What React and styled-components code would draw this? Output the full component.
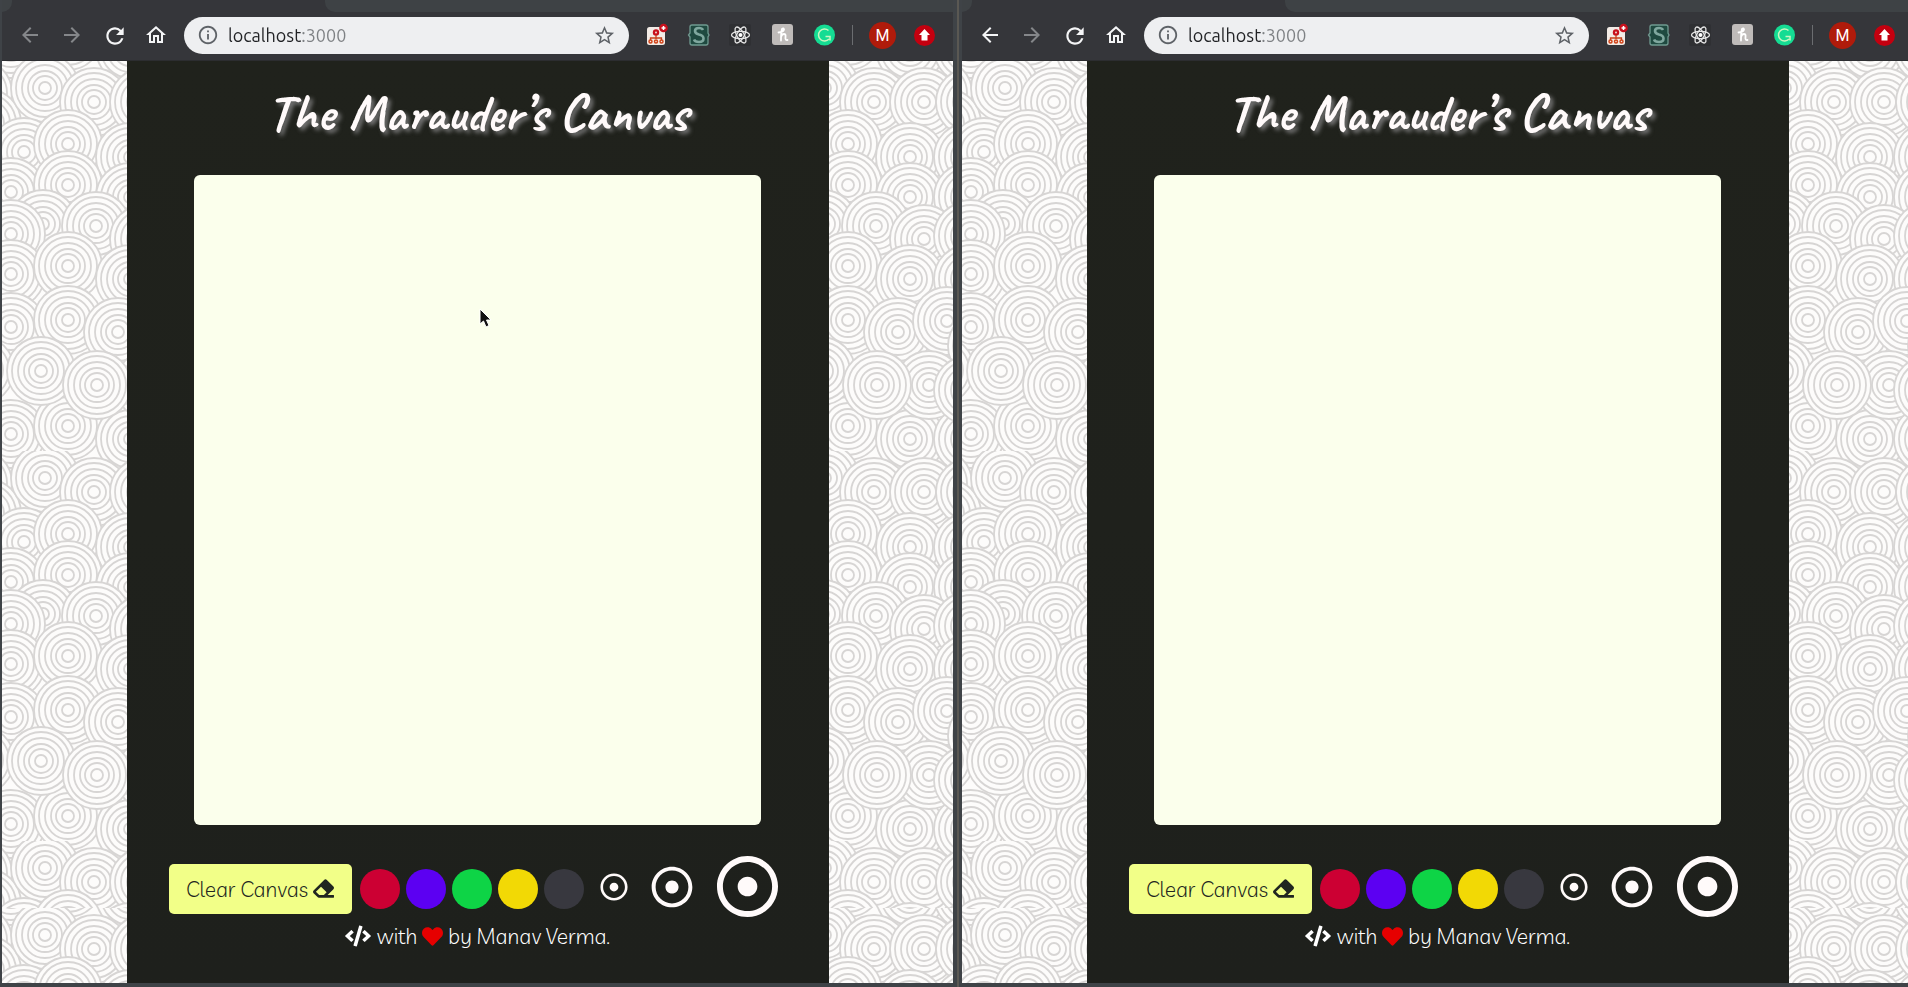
import React from "react";
import styled, { createGlobalStyle } from "styled-components";
import { FaCode, FaEraser, FaHeart, FaRegDotCircle } from "react-icons/fa";
import {
  MdArrowBack,
  MdArrowForward,
  MdRefresh,
  MdInfoOutline,
  MdStarBorder,
  MdOutlineHome,
} from "react-icons/md";

const GlobalStyle = createGlobalStyle`
  *, *::before, *::after { box-sizing: border-box; }
  body { margin: 0; background: #3f4347; overflow-x: hidden; }
  button { border: 0; margin: 0; padding: 0; background: none; cursor: pointer; }
`;

/* ---------- desktop and browser frame ---------- */

const Viewport = styled.main`
  overflow: hidden;
`;

const Desktop = styled.div`
  display: grid;
  grid-template-columns: 1fr 1fr;
  width: calc(100% + 12px);
  min-height: 100vh;
`;

const BrowserWindow = styled.section`
  position: relative;
  display: flex;
  flex-direction: column;
  padding: 0 7px 4px 2px;
  background: linear-gradient(
    to left,
    #3f4347 0 1px,
    #5a5853 1px 3px,
    #3f4347 3px
  );
`;

const TabStrip = styled.div`
  display: flex;
  gap: 313px;
  height: 12px;
  background: #35363a;
`;

const FirstTab = styled.div`
  width: 10px;
  background: #3e4245;
  border-bottom-right-radius: 10px;
`;

const OtherTabs = styled.div`
  flex: 1;
  background: #3e4245;
  border-bottom-left-radius: 10px;
`;

const Toolbar = styled.nav`
  display: flex;
  align-items: center;
  height: 49px;
  padding: 0 18px 2px 16px;
  background: #35363a;
  border-bottom: 1px solid #2c2d30;
`;

const NavButtons = styled.div`
  display: flex;
  gap: 18px;
`;

const NavButton = styled.button`
  display: grid;
  place-items: center;
  width: 24px;
  height: 24px;
  color: ${(p) => (p.disabled ? "#85878a" : "#f4f5f6")};
`;

const AddressBar = styled.label`
  flex: 1;
  display: flex;
  align-items: center;
  gap: 9px;
  height: 37px;
  margin: 0 15px 0 16px;
  padding: 0 13px;
  border-radius: 19px;
  background: #eeeff1;
  color: #5f6368;
`;

const AddressInput = styled.input`
  flex: 1;
  min-width: 0;
  height: 28px;
  padding: 0;
  border: 0;
  outline: 0;
  font: 18px/28px Ubuntu, "Open Sans", "Noto Sans", sans-serif;
  background: linear-gradient(to right, #202124 0 73px, #7d8083 73px);
  background-clip: text;
  -webkit-text-fill-color: transparent;
`;

const Extensions = styled.div`
  display: flex;
  gap: 18px;
`;

const Divider = styled.span`
  width: 1px;
  height: 20px;
  margin: 0 16px;
  background: #6b6d70;
`;

const Avatar = styled.button`
  width: 27px;
  height: 27px;
  margin-right: 18px;
  border-radius: 50%;
  background: #b01b0b;
  color: #ffffff;
  font: 16px/27px Roboto, sans-serif;
`;

const UpdateButton = styled.button`
  display: grid;
  place-items: center;
  width: 21px;
  height: 21px;
  border-radius: 50%;
  background: #c4000f;
`;

/* ---------- the drawing page ---------- */

const Page = styled.div`
  position: relative;
  flex: 1;
  display: flex;
  justify-content: center;
  background: #fdfcfb;
`;

const WallpaperArt = styled.svg`
  position: absolute;
  inset: 0;
  width: 100%;
  height: 100%;
`;

const Column = styled.article`
  position: relative;
  display: flex;
  flex-direction: column;
  align-items: center;
  width: 74%;
  min-width: 640px;
  max-width: 702px;
  background: linear-gradient(#20221c, #1e201c);
  color: #ffffff;
`;

const Title = styled.h1`
  margin: 0;
  font: 700 52px/104px Caveat, "Caveat Brush", Lato, cursive;
  height: 114px;
  color: #fffafa;
  text-shadow: 3px 3px 4px #777777;
`;

const DrawingCanvas = styled.canvas`
  display: block;
  width: 567px;
  height: 650px;
  border-radius: 6px;
  background: #fbffec;
`;

const Controls = styled.div`
  display: flex;
  align-items: center;
  margin-top: 30px;
  padding-right: 8px;
`;

const ClearButton = styled.button`
  display: flex;
  align-items: center;
  justify-content: center;
  gap: 5px;
  width: 183px;
  height: 50px;
  border-radius: 5px;
  background: #f2ff88;
  color: #212520;
  font: 300 21px/24px Livvic, Lato, sans-serif;
`;

const Swatches = styled.div`
  display: flex;
  gap: 6px;
  margin: 0 16px 0 8px;
`;

const Swatch = styled.button`
  width: 40px;
  height: 40px;
  border-radius: 50%;
  background: ${(p) => p.$ink};
`;

const BrushSizes = styled.div`
  display: flex;
  align-items: center;
  gap: 23px;
  padding-bottom: 4px;
`;

const BrushButton = styled.button`
  display: flex;
  color: #fffafa;
`;

const Credit = styled.p`
  display: flex;
  align-items: center;
  gap: 5px;
  margin: 0;
  font: 300 21px/28px Livvic, Lato, sans-serif;
`;

const Pointer = styled.svg`
  position: absolute;
  left: 479px;
  top: 308px;
  width: 14px;
  height: 20px;
`;

/* ---------- wallpaper: a 390px tile of overlapping ringed discs ---------- */

const DISCS = [
  [-24, -30], [9, -17], [66, -25], [128, -12], [186, -12],
  [-24, 32], [-15, 62], [43, 27], [92, 41], [142, 41], [188, 41],
  [22, 91], [66, 83], [128, 96], [186, 96],
  [9, 131], [66, 124], [128, 136], [186, 136],
  [41, 163], [94, 165], [9, 173], [142, 178], [186, 175],
  [9, 213], [66, 205], [128, 218], [186, 218],
  [9, 266], [66, 259], [116, 271], [165, 260], [200, 285],
  [9, 373], [66, 365], [128, 378], [186, 378],
  [147, 324], [-22, 309], [39, 310], [95, 324], [186, 329],
];
const RINGS = [29, 23, 17, 12, 6];

function Wallpaper({ id }) {
  return (
    <WallpaperArt aria-hidden="true">
      <defs>
        <g id={`${id}-disc`} fill="#fdfcfb" stroke="#d7d5d4" strokeWidth="1.8">
          <circle r="34" />
          {RINGS.map((r) => (
            <circle key={r} r={r} />
          ))}
        </g>
        <pattern id={id} width="390" height="390" patternUnits="userSpaceOnUse">
          {DISCS.map(([x, y]) => (
            <use key={`${x},${y}`} href={`#${id}-disc`} x={x} y={y} />
          ))}
        </pattern>
      </defs>
      <rect width="100%" height="847" fill={`url(#${id})`} />
      <svg y="847" width="100%" height="100%">
        <rect width="100%" height="100%" fill={`url(#${id})`} />
      </svg>
    </WallpaperArt>
  );
}

/* ---------- extension icons ---------- */

const SitemapIcon = () => (
  <svg width="24" height="24" viewBox="0 0 24 24">
    <rect x="3" y="4" width="18" height="18" rx="2.5" fill="#f3ece6" />
    <circle cx="12" cy="9.500" r="3.200" fill="#c8101c" />
    <circle cx="12" cy="9.500" r="0.900" fill="#f3ece6" />
    <path d="M12 12v4M6.500 17v-2h11v2" stroke="#c8401c" strokeWidth="1.300" fill="none" />
    <g fill="#f3ece6" stroke="#d2451a" strokeWidth="1.500">
      <circle cx="6.500" cy="18.500" r="1.500" />
      <circle cx="12" cy="18.500" r="1.500" />
      <circle cx="17.500" cy="18.500" r="1.500" />
    </g>
    <circle cx="19.500" cy="5" r="4.300" fill="#c8101c" />
    <path d="M19.500 3v4M17.500 5h4" stroke="#fff" strokeWidth="1.500" />
  </svg>
);

const BracesIcon = () => (
  <svg width="24" height="24" viewBox="0 0 24 24">
    <rect x="4" y="2" width="18" height="20" rx="3" fill="#1f4a40" />
    <path d="M7 2H6Q4 2 4 4v6l-1.500 2L4 14v6q0 2 2 2h14q2 0 2-2v-6l1-2-1-2V4q0-2-2-2z" fill="none" stroke="#6f9a90" strokeWidth="1.300" />
    <path d="M17 7Q16 5 13 5 9 5 9 8q0 2.500 4 3.500 4.500 1 4.500 4Q17.500 19 13 19q-4 0-5-2.500" fill="none" stroke="#7fa79e" strokeWidth="2.600" />
  </svg>
);

const AtomIcon = () => (
  <svg width="24" height="24" viewBox="0 0 24 24">
    <rect x="1" y="1" width="22" height="22" rx="2" fill="#2f3033" />
    <g fill="none" stroke="#e8e8e8" strokeWidth="1.300">
      <ellipse cx="12.500" cy="12" rx="9" ry="3.600" />
      <ellipse cx="12.500" cy="12" rx="9" ry="3.600" transform="rotate(60 12.500 12)" />
      <ellipse cx="12.500" cy="12" rx="9" ry="3.600" transform="rotate(120 12.500 12)" />
    </g>
    <circle cx="12.500" cy="12" r="2" fill="#fff" />
  </svg>
);

const HoneyIcon = () => (
  <svg width="24" height="24" viewBox="0 0 24 24">
    <rect x="2" y="1" width="21" height="21" rx="3" fill="#bfbbb9" />
    <path d="M8.500 9.500Q13.500 9 14 6.500 13.500 4.500 12 6 11 9 11 17.500M11 14q1-3 3-3 2 0 1.500 3-.500 3.500 2 3" fill="none" stroke="#fff" strokeWidth="1.800" strokeLinecap="round" />
  </svg>
);

const GrammarIcon = () => (
  <svg width="24" height="24" viewBox="0 0 24 24">
    <circle cx="12.500" cy="12" r="10.500" fill="#15dc93" />
    <path d="M16.500 7.500A6 6 0 1 0 17 16M13.500 13.500H18v4" fill="none" stroke="#c9f5c0" strokeWidth="1.500" />
  </svg>
);

const EXTENSIONS = [
  ["Site map", SitemapIcon],
  ["Snippets", BracesIcon],
  ["React tools", AtomIcon],
  ["Coupons", HoneyIcon],
  ["Grammar check", GrammarIcon],
];

const INKS = [
  ["Red", "#cc0033"],
  ["Purple", "#5c00f2"],
  ["Green", "#0ed446"],
  ["Yellow", "#f2d905"],
  ["Charcoal", "#38383f"],
];

const BRUSHES = [
  ["Small brush", 28],
  ["Medium brush", 42],
  ["Large brush", 63],
];

function Browser({ id, canGoBack, children }) {
  return (
    <BrowserWindow>
      <TabStrip>
        <FirstTab />
        <OtherTabs />
      </TabStrip>
      <Toolbar>
        <NavButtons>
          <NavButton aria-label="Back" disabled={!canGoBack}>
            <MdArrowBack size={24} />
          </NavButton>
          <NavButton aria-label="Forward" disabled>
            <MdArrowForward size={24} />
          </NavButton>
          <NavButton aria-label="Reload">
            <MdRefresh size={26} />
          </NavButton>
          <NavButton aria-label="Home">
            <MdOutlineHome size={24} />
          </NavButton>
        </NavButtons>
        <AddressBar>
          <MdInfoOutline size={22} />
          <AddressInput aria-label="Address" defaultValue="localhost:3000" />
          <MdStarBorder size={23} />
        </AddressBar>
        <Extensions>
          {EXTENSIONS.map(([name, Icon]) => (
            <NavButton key={name} aria-label={name}>
              <Icon />
            </NavButton>
          ))}
        </Extensions>
        <Divider />
        <Avatar>M</Avatar>
        <UpdateButton aria-label="Update">
          <svg width="11" height="12" viewBox="0 0 11 12">
            <path d="M5.500 0 11 6H8.500v5.500h-6V6H0z" fill="#fff" />
          </svg>
        </UpdateButton>
      </Toolbar>
      <Page>
        <Wallpaper id={id} />
        <Column>
          <Title>The Marauder’s Canvas</Title>
          <DrawingCanvas />
          <Controls>
            <ClearButton>
              Clear Canvas <FaEraser size={21} />
            </ClearButton>
            <Swatches>
              {INKS.map(([name, ink]) => (
                <Swatch key={name} aria-label={name} $ink={ink} />
              ))}
            </Swatches>
            <BrushSizes>
              {BRUSHES.map(([name, size]) => (
                <BrushButton key={name} aria-label={name}>
                  <FaRegDotCircle size={size} />
                </BrushButton>
              ))}
            </BrushSizes>
          </Controls>
          <Credit>
            <FaCode size={26} />
            <span>with</span>
            <FaHeart size={21} color="#e60000" />
            <span>by Manav Verma.</span>
          </Credit>
        </Column>
      </Page>
      {children}
    </BrowserWindow>
  );
}

export default function App() {
  return (
    <>
      <GlobalStyle />
      <Viewport>
        <Desktop>
          <Browser id="wallpaper-left">
            <Pointer viewBox="0 0 14 20" aria-hidden="true">
              <path d="M1 1v15l3.500-3 2.500 6 3-1.500L7.500 12H12z" fill="#111" stroke="#fff" strokeWidth="1" />
            </Pointer>
          </Browser>
          <Browser id="wallpaper-right" canGoBack />
        </Desktop>
      </Viewport>
    </>
  );
}
